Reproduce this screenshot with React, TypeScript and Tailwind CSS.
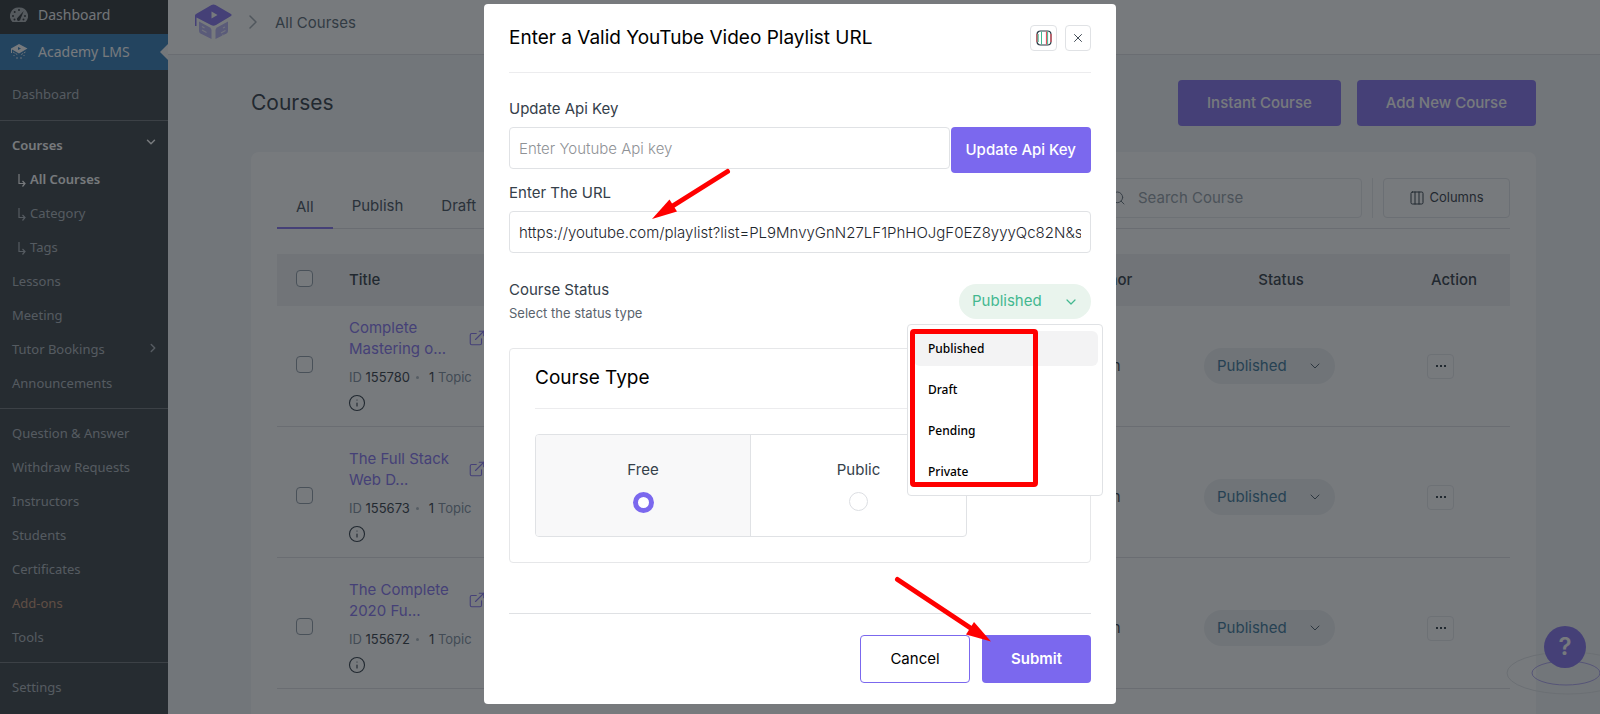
import { useState } from "react"
import { ChevronDown, ChevronRight, Columns3, ExternalLink, Info, Search, X } from "lucide-react"

const courses = [
  { id: "155780", title: ["Complete", "Mastering o..."], topics: 1 },
  { id: "155673", title: ["The Full Stack", "Web D..."], topics: 1 },
  { id: "155672", title: ["The Complete", "2020 Fu..."], topics: 1 },
]

const statuses = ["Published", "Draft", "Pending", "Private"]

const playlistUrl = "https://youtube.com/playlist?list=PL9MnvyGnN27LF1PhHOJgF0EZ8yyyQc82N&s"

const Logo = ({ className }: { className: string }) => (
  <svg viewBox="0 0 39 37" className={className} aria-hidden="true">
    <path d="M5 19.500 L16 25.500 Q17.500 26.500 17.500 28 V37 L6.500 31.500 Q5 30.500 5 29 Z" fill="#b3adf3" />
    <path d="M34 19.500 L23 25.500 Q21.500 26.500 21.500 28 V37 L32.500 31.500 Q34 30.500 34 29 Z" fill="#b3adf3" />
    <path d="M19.500 2.500 Q20.500 2.500 21.500 3 L37 12 Q38.500 13 37 14 L22 23 Q19.500 24.500 17 23 L2.500 15.500 V24 H1 V13.500 Q1 12.500 2 12 L17.500 3 Q18.500 2.500 19.500 2.500 Z" fill="#7b68ee" />
    <path d="M17.500 9.500 L23.500 13 L17.500 16.500 Z" fill="#fff" />
    <path d="M8 24.500 L10.500 26 M8 28 L12.500 30.500 M27 31 L31.500 28.500 M28 33.500 L29.500 32.700 M29 26 L31 25" stroke="#efedff" strokeWidth="1.200" fill="none" />
  </svg>
)

const GaugeIcon = () => (
  <svg viewBox="0 0 18 16" className="w-[18px] h-4" aria-hidden="true">
    <path d="M9 0.500 A8.500 8.500 0 0 0 2.500 15 H15.500 A8.500 8.500 0 0 0 9 0.500 Z" fill="#a7aaad" />
    <g fill="#1d2327">
      <circle cx="9" cy="3" r="1" />
      <circle cx="4.700" cy="5" r="1" />
      <circle cx="3" cy="9" r="1" />
      <circle cx="15" cy="9" r="1" />
      <circle cx="4.500" cy="12.500" r="1" />
      <circle cx="13.500" cy="12.500" r="1" />
      <path d="M13.700 4 L10.500 12 A1.800 1.800 0 1 1 7.800 10.500 Z" />
    </g>
  </svg>
)

const CapIcon = () => (
  <svg viewBox="0 0 18 16" className="w-[18px] h-4" aria-hidden="true">
    <path d="M9 0 L17.500 4.500 L9 9.500 L2 5.500 V9 H1 V4.500 Z" fill="#fff" />
    <path d="M8 3 L11 4.500 L8 6 Z" fill="#2271b1" />
    <path d="M3 8 L8 11 M15.500 8 L10.500 11 M4 11 V12 M7 13 V15 M11 13 V15 M14 11 V12" stroke="#dfe9f2" strokeWidth="1" fill="none" strokeDasharray="2 1" />
  </svg>
)

const BranchIcon = () => (
  <svg viewBox="0 0 8 13" className="w-2 h-[13px]" fill="none" stroke="currentColor" strokeWidth="1.200" aria-hidden="true">
    <path d="M1 0 V9.500 H6.500 M4.500 7 L7 9.500 L4.500 12.500" />
  </svg>
)

const MenuLink = ({ label, className = "text-[#a5adb5]" }: { label: string; className?: string }) => (
  <a href="#" className={`flex items-center h-[34px] px-3 ${className}`}>{label}</a>
)

const SubLink = ({ label, active }: { label: string; active?: boolean }) => (
  <a href="#" className={`flex items-center gap-1 h-[34px] pl-[18px] ${active ? "font-semibold text-white" : "text-[#a5adb5]"}`}>
    <BranchIcon />
    {label}
  </a>
)

const Sidebar = () => (
  <aside className="w-[168px] shrink-0 bg-[#2c3338] font-['Noto_Sans','Open_Sans',sans-serif] text-[13px]">
    <a href="#" className="flex items-center gap-2.5 h-[34px] px-2.5 pb-1 bg-[#1d2327] text-sm text-[#f0f0f1]">
      <GaugeIcon />
      Dashboard
    </a>
    <a href="#" className="relative flex items-center gap-2.5 h-9 px-2.5 bg-[#2271b1] text-sm text-white">
      <CapIcon />
      Academy LMS
      <span className="absolute right-0 top-2.5 border-y-8 border-r-8 border-y-transparent border-r-[#f6f7f7]" />
    </a>
    <nav aria-label="Academy LMS">
      <div className="py-2 border-b border-[#646970]">
        <MenuLink label="Dashboard" />
      </div>
      <div className="pt-2 pb-[7px] border-b border-[#646970]">
        <a href="#" className="flex items-center justify-between h-[34px] px-2.5 pl-3 font-semibold text-white">
          Courses
          <ChevronDown className="size-3.5 mb-2" strokeWidth={2.5} />
        </a>
        <SubLink label="All Courses" active />
        <SubLink label="Category" />
        <SubLink label="Tags" />
        <MenuLink label="Lessons" />
        <MenuLink label="Meeting" />
        <a href="#" className="flex items-center justify-between h-[34px] px-2 pl-3 text-[#a5adb5]">
          Tutor Bookings
          <ChevronRight className="size-3.5 mb-1" strokeWidth={2.5} />
        </a>
        <MenuLink label="Announcements" />
      </div>
      <div className="pt-2 pb-[7px] border-b border-[#646970]">
        <MenuLink label="Question & Answer" />
        <MenuLink label="Withdraw Requests" />
        <MenuLink label="Instructors" />
        <MenuLink label="Students" />
        <MenuLink label="Certificates" />
        <MenuLink label="Add-ons" className="text-[#c08c6c]" />
        <MenuLink label="Tools" />
      </div>
      <div className="py-2">
        <MenuLink label="Settings" />
      </div>
    </nav>
  </aside>
)

const CheckBox = ({ label }: { label: string }) => (
  <input type="checkbox" aria-label={label} className="block appearance-none size-[17px] mb-1 ml-[19px] rounded-sm border border-[#8793a0] bg-white" />
)

const CourseTable = () => (
  <table className="w-full table-fixed mt-[25px] text-[#1e2a36]">
    <colgroup>
      <col className="w-[72px]" />
      <col />
      <col className="w-28" />
      <col className="w-[234px]" />
      <col className="w-28" />
    </colgroup>
    <thead>
      <tr className="h-[52px] bg-[#eef0f2] text-[15px]">
        <th><CheckBox label="Select all" /></th>
        <th className="text-left font-medium">Title</th>
        <th className="font-medium">Author</th>
        <th className="font-medium">Status</th>
        <th className="font-medium">Action</th>
      </tr>
    </thead>
    <tbody>
      {courses.map((course) => (
        <tr key={course.id} className="border-b border-[#dcdee2] [&:not(:first-child)>td]:pt-2.5">
          <td><CheckBox label={`Select ${course.title.join(" ")}`} /></td>
          <td>
            <div className="pt-[11px] pb-3.5">
              <div className="flex items-center w-[137px] justify-between">
                <a href="#" className="text-[15px] leading-[21px] text-[#7b68ee]">
                  {course.title[0]}
                  <br />
                  {course.title[1]}
                </a>
                <ExternalLink className="size-[18px] text-[#7b68ee]" strokeWidth={1.5} />
              </div>
              <div className="flex items-center gap-1.5 mt-2 text-[13px] leading-5 whitespace-nowrap">
                <span><span className="text-[#738496]">ID</span> {course.id}</span>
                <span className="size-[3px] rounded-full bg-[#a9b4be]" />
                <span className="ml-1">{course.topics} <span className="text-[#738496]">Topic</span></span>
              </div>
              <Info className="size-[18px] mt-[7px] -ml-px" strokeWidth={1.5} />
            </div>
          </td>
          <td className="text-[15px] text-center pr-5">Admin</td>
          <td>
            <div className="relative w-[131px] ml-10">
              <select aria-label="Status" defaultValue="Published" className="w-full h-9 pl-[13px] appearance-none rounded-full bg-[#eceff1] text-[15px] text-[#2b6b92]">
                {statuses.map((s) => <option key={s}>{s}</option>)}
              </select>
              <ChevronDown className="absolute right-3 top-2.5 size-4 pointer-events-none text-[#3d4f5f]" strokeWidth={1.5} />
            </div>
          </td>
          <td>
            <button aria-label="More actions" className="flex items-center justify-center gap-0.5 w-[27px] h-[25px] ml-[29px] rounded-sm border border-[#e4e6ea]">
              <span className="size-0.5 bg-[#1e2a36]" />
              <span className="size-0.5 bg-[#1e2a36]" />
              <span className="size-0.5 bg-[#1e2a36]" />
            </button>
          </td>
        </tr>
      ))}
    </tbody>
  </table>
)

const HelpButton = () => (
  <div className="absolute bottom-4 right-0 w-[94px] h-16">
    <svg viewBox="0 0 94 64" className="w-full h-full" fill="none" aria-hidden="true">
      <ellipse cx="62" cy="39" rx="61" ry="21" stroke="#dfe2e6" />
      <ellipse cx="60" cy="39" rx="34" ry="12" stroke="#a79cf0" />
    </svg>
    <button aria-label="Help" className="absolute right-3.5 bottom-[30px] size-[42px] rounded-full bg-[#7b68ee] text-2xl leading-none font-semibold text-white">?</button>
  </div>
)

const Background = () => (
  <div className="flex h-full">
    <Sidebar />
    <main className="grow min-w-0 bg-[#f2f4f6]">
      <header className="flex items-center h-[55px] pl-[26px] pb-3.5 bg-white border-b border-[#dcdee2]">
        <Logo className="w-[39px] h-[37px]" />
        <ChevronRight className="size-6 ml-2 mt-1 text-[#9aa2ab]" strokeWidth={1.5} />
        <span className="ml-2.5 pt-1.5 text-[15px] text-[#4b5a68]">All Courses</span>
      </header>
      <div className="pl-[83px] pr-16">
        <div className="flex items-center justify-between pt-[25px]">
          <h1 className="text-[21px] text-[#1e2a36]">Courses</h1>
          <div className="flex gap-4">
            <button className="h-[46px] px-[29px] rounded-sm bg-[#7b68ee] text-[15px] font-medium text-white">Instant Course</button>
            <button className="h-[46px] px-[29px] rounded-sm bg-[#7b68ee] text-[15px] font-medium text-white">Add New Course</button>
          </div>
        </div>
        <section className="mt-[26px] h-screen px-[26px] pt-[26px] rounded-lg bg-white">
          <div className="flex justify-between border-b border-[#dcdee2]">
            <div className="flex items-end text-[15px] text-[#35424f]">
              <button className="px-[19px] pb-[9px] -mb-px border-b-2 border-[#7b68ee]">All</button>
              <button className="px-[19px] pb-[11px]">Publish</button>
              <button className="px-[19px] pb-[11px]">Draft</button>
            </div>
            <div className="flex gap-2.5 pb-2.5">
              <label className="flex items-center gap-3 w-[270px] h-10 pl-[17px] rounded-sm border border-[#e4e6ea]">
                <Search className="size-4 shrink-0 text-[#5b6772]" strokeWidth={1.5} />
                <input type="text" aria-label="Search Course" placeholder="Search Course" className="w-full outline-0 text-[15px] placeholder:text-[#8b96a1]" />
              </label>
              <span className="w-px bg-[#e4e6ea]" />
              <button className="flex items-center justify-center gap-1 w-[127px] h-10 rounded-sm border border-[#dfe2e6] text-[13px] text-[#1e2a36]">
                <Columns3 className="size-4" strokeWidth={1.5} />
                Columns
              </button>
            </div>
          </div>
          <CourseTable />
        </section>
      </div>
    </main>
    <HelpButton />
  </div>
)

const StatusPicker = () => {
  const [status, setStatus] = useState("Published")
  return (
    <div className="relative mt-[5px]">
      <button aria-haspopup="listbox" aria-expanded="true" className="flex items-center justify-between w-[132px] h-[35px] pl-[13px] pr-3 rounded-full bg-[#e9f4ed] text-[15px] text-[#43b890]">
        {status}
        <ChevronDown className="size-4" strokeWidth={1.8} />
      </button>
      <div role="listbox" aria-label="Course status" className="absolute z-10 top-10 -right-3 w-[196px] p-1.5 pr-1 rounded-sm border border-[#e0e2e5] bg-white font-['Noto_Sans','Open_Sans',sans-serif] text-xs font-medium text-black">
        <div className="flex flex-col gap-1.5">
          {statuses.map((s) => (
            <button
              key={s}
              role="option"
              aria-selected={s === status}
              onClick={() => setStatus(s)}
              className={`h-[35px] px-3.5 rounded-md text-left ${s === status ? "bg-[#f3f3f4]" : ""}`}
            >
              {s}
            </button>
          ))}
        </div>
        {/* highlight frame */}
        <div className="absolute top-1 left-[2px] w-32 h-[158px] rounded-sm border-5 border-[#ff0000] pointer-events-none" />
      </div>
    </div>
  )
}

const Arrows = () => (
  <svg viewBox="0 0 632 700" className="absolute inset-0 w-full h-full z-20 pointer-events-none" aria-hidden="true">
    <g stroke="#ff0000" strokeWidth="5" strokeLinecap="round">
      <path d="M243.500 167.500 L187 203" />
      <path d="M413.500 575.500 L491 627" />
    </g>
    <path d="M168 215 L185.500 195.500 L193 207.500 Z" fill="#ff0000" />
    <path d="M507 637.500 L490 618 L482 630.500 Z" fill="#ff0000" />
  </svg>
)

const Modal = () => (
  <div role="dialog" aria-label="Enter a Valid YouTube Video Playlist URL" className="relative w-[632px] px-[25px] pb-[21px] rounded-sm bg-white text-[15px] text-[#35404a]">
    <div className="flex items-center justify-between h-[69px] border-b border-[#ececee]">
      <h2 className="text-[19px] text-black">Enter a Valid YouTube Video Playlist URL</h2>
      <div className="flex gap-2">
        <button aria-label="Columns" className="flex items-center justify-center w-[27px] h-[26px] rounded-sm border border-[#e0e2e5]">
          <svg viewBox="0 0 16 16" className="size-4" fill="none" aria-hidden="true">
            <rect x="1" y="1" width="14" height="14" rx="3.500" stroke="#2b3a45" strokeWidth="1.200" />
            <path d="M1 4 V12 M10.500 1.500 V14.500 M15 4 V12" stroke="#e0525f" strokeWidth="1.200" />
            <path d="M2.200 4 V12 M5.500 1.500 V14.500 M11.600 1.500 V14.500" stroke="#43b890" strokeWidth="1" />
          </svg>
        </button>
        <button aria-label="Close" className="flex items-center justify-center w-[26px] h-[26px] rounded-sm border border-[#e0e2e5]">
          <X className="size-3.5" strokeWidth={1.6} />
        </button>
      </div>
    </div>

    <label htmlFor="api-key" className="block mt-[25px] leading-[22px]">Update Api Key</label>
    <div className="flex gap-px mt-[7px]">
      <input id="api-key" type="text" placeholder="Enter Youtube Api key" className="grow h-[42px] px-[9px] rounded-sm border border-[#e0e2e5] outline-0 font-light placeholder:text-[#8f9296]" />
      <button className="h-[46px] px-[15px] rounded-sm bg-[#7b68ee] font-medium text-white">Update Api Key</button>
    </div>

    <label htmlFor="playlist" className="block mt-[9px] leading-[22px]">Enter The URL</label>
    <input id="playlist" type="text" defaultValue={playlistUrl} className="w-full h-[42px] mt-[7px] px-[9px] rounded-sm border border-[#e0e2e5] outline-0 font-light text-[#1e262d]" />

    <div className="flex items-start justify-between mt-[26px]">
      <div>
        <div className="leading-[22px]">Course Status</div>
        <div className="text-[13px] leading-6 text-[#5a636c]">Select the status type</div>
      </div>
      <StatusPicker />
    </div>

    <div className="mt-[23px] px-[25px] pb-[25px] rounded-sm border border-[#e6e7e9]">
      <h3 className="flex items-center h-[60px] border-b border-[#ececee] text-[19px] text-black">Course Type</h3>
      <div className="grid grid-cols-2 mt-[25px] w-[432px] rounded-sm border border-[#e0e2e5] overflow-hidden">
        <label className="flex flex-col items-center pt-6 h-[101px] border-r border-[#e0e2e5] bg-[#f8f8f9]">
          Free
          <input type="radio" name="course-type" defaultChecked className="appearance-none size-[19px] mt-2.5 rounded-full border border-[#dcdee2] bg-white checked:size-[21px] checked:border-5 checked:border-[#7b68ee]" />
        </label>
        <label className="flex flex-col items-center pt-6 h-[101px]">
          Public
          <input type="radio" name="course-type" className="appearance-none size-[19px] mt-2.5 rounded-full border border-[#dcdee2] bg-white checked:size-[21px] checked:border-5 checked:border-[#7b68ee]" />
        </label>
      </div>
    </div>

    <div className="flex justify-end gap-3 mt-[50px] pt-[21px] border-t border-[#dfe1e4]">
      <button className="w-[110px] h-12 rounded-sm border border-[#7b68ee] text-black">Cancel</button>
      <button className="w-[109px] h-12 rounded-sm bg-[#7b68ee] font-semibold text-white">Submit</button>
    </div>
    <Arrows />
  </div>
)

const App = () => (
  <div className="relative h-screen overflow-hidden font-[Inter,sans-serif]">
    <Background />
    <div className="fixed inset-0 flex items-start justify-center pt-1 bg-[#23282d]/62">
      <Modal />
    </div>
  </div>
)

export default App
